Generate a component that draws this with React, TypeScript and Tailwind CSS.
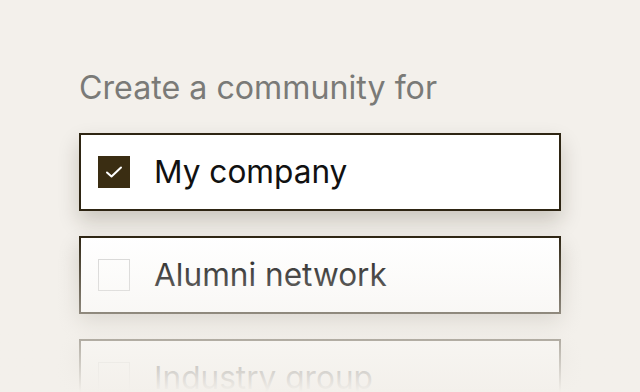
import React from "react";

function Option({ label, checked }: { label: string; checked?: boolean }) {
  return (
    <div className="flex h-[78px] items-center gap-[24px] border-2 border-[#2e2513] bg-white px-[17px] shadow-[0_10px_20px_rgba(40,30,10,0.2)]">
      {checked ? (
        <div className="flex h-[32px] w-[32px] items-center justify-center bg-[#3a2d12]">
          <svg width="18" height="14" viewBox="0 0 18 14" fill="none">
            <path d="M2 7.5 L6.5 11.5 L16 2.5" stroke="white" strokeWidth="2" strokeLinecap="round" strokeLinejoin="round" />
          </svg>
        </div>
      ) : (
        <div className="h-[32px] w-[32px] border border-[#d6d6d6] bg-white" />
      )}
      <span className="text-[31.6px] leading-[38px] text-[#111]">{label}</span>
    </div>
  );
}

export default function App() {
  return (
    <div
      className="relative h-[392px] w-full overflow-hidden bg-[#f3f0eb]"
      style={{ fontFamily: "Inter, 'Noto Sans', sans-serif" }}
    >
      <div className="w-[561px] pl-[79px] pt-[69px]">
        <h1 className="text-[32.2px] font-normal leading-[38px] text-[#7a7a77]">Create a community for</h1>
        <div className="mt-[26px] flex flex-col gap-[25px]">
          <Option label="My company" checked />
          <Option label="Alumni network" />
          <Option label="Industry group" />
        </div>
      </div>
      <div className="pointer-events-none absolute inset-x-0 bottom-0 top-[236px] bg-linear-to-b from-[#f3f0eb00] to-[#f3f0eb]" />
    </div>
  );
}
